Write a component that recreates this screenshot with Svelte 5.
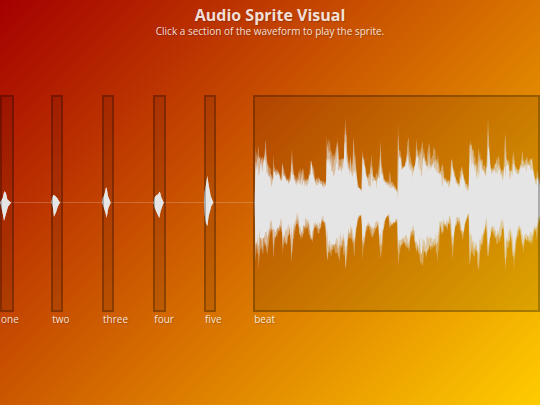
<script lang="ts">
	type Sprite = { name: string; start: number; width: number };

	// start and width are percentages of the waveform
	const sprites: Sprite[] = [
		{ name: 'one', start: 0, width: 2.6 },
		{ name: 'two', start: 9.5, width: 2.1 },
		{ name: 'three', start: 18.9, width: 2.2 },
		{ name: 'four', start: 28.4, width: 2.4 },
		{ name: 'five', start: 37.8, width: 2.2 },
		{ name: 'beat', start: 46.9, width: 53.1 }
	];

	const hitsTop =
		'0,338 3,332 8,325 13,302 18,310 22,328 33,338 154,338 156,325 160,315 165,317 172,325 180,338 306,338 308,325 313,315 319,288 324,318 332,338 461,338 464,322 470,315 475,313 479,303 484,322 491,338 612,338 614,305 617,290 622,258 626,285 632,318 640,338 764,338';
	const hitsBottom =
		'0,338 3,345 8,370 12,392 17,375 24,350 33,338 154,338 158,348 162,380 168,367 174,348 180,338 306,338 310,348 316,367 320,383 325,354 332,338 461,338 464,353 470,367 478,384 482,362 491,338 612,338 614,372 617,397 622,408 626,378 634,348 640,338 764,338';

	const peakTop = [
		[0, hitsTop],
		[750, '15,150 17,190 22,190 25,165 30,200 38,200 44,180 47,150 50,190 55,230 62,240 68,265 70,185 73,235 80,235 88,250 94,260 97,205 101,240 110,265 118,265 123,240 125,170 128,210 132,255 142,260 150,235 160,240 164,262 175,265 184,200 190,230 196,268 205,262 220,275 228,275 229,125 233,150 238,150 242,180 250,200 257,175 263,125 266,180 272,210 282,200 284,130'],
		[1035, '1,90 5,120 9,200 13,240 15,200 18,205 22,240 25,150 30,185 34,240 40,290 50,300 51,150 55,195 61,225 66,265 74,250 79,200 84,255 92,255 99,245 105,200 107,155 111,235 118,265 124,275 131,275 134,240 138,270 148,285 157,300 159,115 163,165 167,180 172,225 180,230 190,135 194,190 202,230 211,225 214,140 220,190 228,175 235,155 240,210 246,195 253,165 258,215 268,170 275,210 278,190 284,230'],
		[1320, '0,240 9,210 12,265 22,265 30,275 34,200 40,225 48,265 56,280 62,230 68,235 74,270 86,290 88,165 94,135 97,175 105,195 112,230 116,155 122,200 132,220 138,235 144,95 148,170 152,235 160,235 168,210 174,195 182,225 190,245 196,115 200,205 207,215 213,240 221,180 226,230 236,240 249,175 252,220 262,200 268,215 274,190 280,235 287,270 292,240 300,280']
	];

	const bodyTop = [
		[0, hitsTop],
		[750, '16,230 28,235 40,230 48,235 55,255 66,285 72,255 85,250 94,285 98,250 108,275 120,280 126,235 133,275 145,285 155,270 166,290 176,275 185,230 192,270 200,285 210,280 220,290 229,290 232,215 240,220 250,245 262,225 270,250 280,225'],
		[1035, '0,170 8,235 22,262 30,235 38,290 50,303 53,215 62,250 70,290 80,270 95,285 107,245 116,275 132,290 145,292 158,307 161,210 172,240 190,215 204,260 214,200 225,240 240,225 252,250 262,225 276,240'],
		[1320, '0,265 15,275 30,290 36,230 48,280 58,290 66,255 76,290 87,305 90,205 104,230 112,265 120,225 138,265 145,190 154,250 170,240 190,270 197,215 212,265 222,235 234,255 250,230 262,235 275,230 288,285 293,265 300,290']
	];

	const peakBottom = [
		[0, hitsBottom],
		[750, '15,545 20,480 26,530 32,470 38,490 46,460 52,490 57,450 64,430 67,420 70,510 74,450 84,435 92,415 96,430 97,495 102,455 110,470 116,435 121,440 124,530 129,470 134,425 142,405 150,440 155,460 162,430 172,410 177,430 181,450 188,455 192,420 198,415 206,435 212,415 218,395 226,415 230,490 232,555 236,480 243,500 250,475 257,490 262,485 268,510 276,470 284,500'],
		[1035, '1,545 5,510 10,445 20,440 28,500 34,420 40,385 50,375 52,515 56,480 62,430 70,405 76,425 82,445 88,425 100,410 106,520 110,490 114,430 122,385 130,375 134,420 142,405 150,400 157,395 159,550 163,490 172,460 180,470 188,470 192,490 198,445 206,430 212,490 218,480 228,520 233,520 240,485 247,505 254,470 262,490 270,475 277,510 284,450'],
		[1320, '0,410 8,440 14,405 22,420 30,400 38,505 44,425 54,395 62,430 68,450 76,400 86,375 88,540 94,480 104,500 110,490 115,565 120,490 130,450 138,410 144,525 150,445 158,425 170,460 180,455 190,415 196,560 202,480 212,440 222,540 228,460 240,420 249,490 256,450 266,455 275,470 284,420 290,445 300,385']
	];

	const bodyBottom = [
		[0, hitsBottom],
		[750, '16,450 28,440 40,430 50,430 64,390 70,430 84,410 93,385 99,440 112,420 118,400 126,450 134,395 143,375 152,425 165,390 176,395 184,445 192,400 200,395 206,410 217,380 228,400 231,455 245,460 258,455 268,445 280,430'],
		[1035, '0,460 10,420 20,405 28,435 38,380 50,372 54,450 64,400 72,390 82,420 98,385 108,450 118,390 130,372 140,400 157,385 160,465 172,440 190,445 205,405 213,450 230,465 248,455 260,445 278,440'],
		[1320, '0,390 15,400 30,380 38,450 48,390 58,375 68,425 78,385 87,362 90,440 104,460 118,465 132,420 139,380 145,465 156,400 172,430 190,385 197,455 212,410 223,470 236,400 250,440 275,430 290,395 300,380']
	];

	function parse(chunks: (string | number)[][]) {
		return chunks.flatMap(([offset, list]) =>
			String(list)
				.split(' ')
				.map((pair) => {
					const [x, y] = pair.split(',').map(Number);
					return [x + Number(offset), y];
				})
		);
	}

	function sample(points: number[][], x: number) {
		const i = points.findIndex((p) => p[0] >= x);
		if (i < 0) return points[points.length - 1][1];
		if (i === 0) return points[0][1];
		const [ax, ay] = points[i - 1];
		const [bx, by] = points[i];
		return ay + ((by - ay) * (x - ax)) / (bx - ax);
	}

	function noise(n: number) {
		const v = Math.sin(n * 127.1) * 43758.5453;
		return v - Math.floor(v);
	}

	function outline(body: number[][], peak: number[][], level: number, seed: number) {
		const points: string[] = [];
		for (let x = 0; x <= 1620; x += 2) {
			const low = sample(body, x);
			const high = sample(peak, x);
			const amount = Math.min(1.1, level + (noise(x + seed) - 0.5) * 0.9);
			points.push(`${x},${(low + (high - low) * amount).toFixed(1)}`);
		}
		return points;
	}

	const tracks = [parse(bodyTop), parse(peakTop), parse(bodyBottom), parse(peakBottom)];

	const layers = [0.95, 0.5, 0.05].map((level, i) => {
		const top = outline(tracks[0], tracks[1], level, i * 7);
		const bottom = outline(tracks[2], tracks[3], level, i * 7 + 3);
		return { id: i, points: [...top, ...bottom.reverse()].join(' ') };
	});

	let playing = $state('');
</script>

<main class="page">
	<header>
		<h1>Audio Sprite Visual</h1>
		<p>Click a section of the waveform to play the sprite.</p>
	</header>

	<section class="stage" aria-label="Waveform">
		<svg class="waveform" viewBox="0 15 1620 651" preserveAspectRatio="none" aria-hidden="true">
			<rect class="axis" x="0" y="336" width="1620" height="3" />
			{#each layers as layer (layer.id)}
				<polygon class="layer-{layer.id}" points={layer.points} />
			{/each}
		</svg>

		{#each sprites as sprite (sprite.name)}
			<button
				type="button"
				class="sprite"
				class:playing={playing === sprite.name}
				style="left: {sprite.start}%; width: {sprite.width}%"
				onclick={() => (playing = sprite.name)}
			>
				<span class="label">{sprite.name}</span>
			</button>
		{/each}
	</section>
</main>

<style>
	:global(body) {
		margin: 0;
	}

	.page {
		box-sizing: border-box;
		min-height: 100vh;
		padding-top: 6px;
		display: flex;
		flex-direction: column;
		gap: 57px;
		overflow: hidden;
		background: linear-gradient(135deg, #a50000, #ffcc00);
		color: rgba(255, 255, 255, 0.85);
		font-family: 'Trebuchet MS', 'Open Sans', sans-serif;
		text-shadow: 1px 1px 1px rgba(0, 0, 0, 0.2);
	}

	header {
		text-align: center;
	}

	h1 {
		margin: 0;
		font-size: 16px;
		font-weight: 700;
		line-height: 19px;
	}

	p {
		margin: 0;
		font-size: 10px;
		line-height: 13px;
	}

	.stage {
		position: relative;
		height: 217px;
	}

	.waveform {
		display: block;
		width: 100%;
		height: 100%;
		fill: #fff;
	}

	.axis {
		opacity: 0.2;
	}

	.layer-0 {
		opacity: 0.4;
	}

	.layer-1 {
		opacity: 0.5;
	}

	.sprite {
		box-sizing: border-box;
		position: absolute;
		top: 0;
		height: 100%;
		padding: 0;
		border: 2px solid rgba(0, 0, 0, 0.25);
		background: rgba(0, 0, 0, 0.1);
		color: inherit;
		font: inherit;
		text-shadow: inherit;
		cursor: pointer;
	}

	.sprite:hover,
	.playing {
		background: rgba(0, 0, 0, 0.2);
	}

	.label {
		position: absolute;
		top: 100%;
		left: -1px;
		padding-top: 2px;
		font-size: 10px;
		line-height: 14px;
		white-space: nowrap;
	}
</style>
